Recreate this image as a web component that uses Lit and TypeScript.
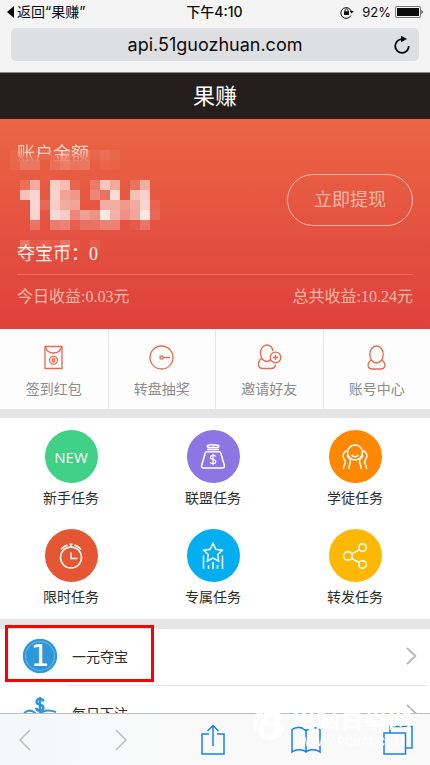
import { LitElement, html, css, svg } from "lit";
import { customElement } from "lit/decorators.js";

// Censor blocks over the hero: [x, y, opacity], on a 10px grid.
const CELLS: [number, number, number][] = [
  [1, 3, 0.05], [2, 3, 0.08], [3, 3, 0.08], [4, 3, 0.05], [5, 3, 0.08], [6, 3, 0.2], [7, 3, 0.1], [8, 3, 0.12], [9, 3, 0.04], [10, 3, 0.1], [11, 3, 0.05],
  [1, 4, 0.05], [2, 4, 0.16], [3, 4, 0.16], [5, 4, 0.12], [6, 4, 0.2], [7, 4, 0.14], [8, 4, 0.16], [10, 4, 0.05], [11, 4, 0.03],
  [2, 6, 0.12], [3, 6, 0.5], [5, 6, 0.7], [6, 6, 0.6], [7, 6, 0.07], [9, 6, 0.2], [10, 6, 0.66], [11, 6, 0.48], [13, 6, 0.15], [14, 6, 0.5],
  [2, 7, 0.64], [3, 7, 0.76], [5, 7, 0.74], [6, 7, 0.45], [7, 7, 0.38], [9, 7, 0.28], [10, 7, 0.16], [11, 7, 0.8], [13, 7, 0.62], [14, 7, 0.72],
  [3, 8, 0.76], [4, 8, 0.1], [5, 8, 0.7], [6, 8, 0.5], [7, 8, 0.46], [10, 8, 0.52], [11, 8, 0.52], [12, 8, 0.4], [13, 8, 0.5], [14, 8, 0.75], [15, 8, 0.08],
  [3, 9, 0.76], [5, 9, 0.78], [6, 9, 0.7], [7, 9, 0.3], [8, 9, 0.44], [9, 9, 0.36], [10, 9, 0.86], [11, 9, 0.54], [12, 9, 0.36], [13, 9, 0.48], [14, 9, 0.86], [15, 9, 0.12],
  [3, 10, 0.2], [5, 10, 0.24], [6, 10, 0.28], [7, 10, 0.07], [8, 10, 0.18], [9, 10, 0.18], [10, 10, 0.28], [11, 10, 0.28], [13, 10, 0.05], [14, 10, 0.2],
  [2, 12, 0.2], [3, 12, 0.06], [4, 12, 0.1], [5, 12, 0.06], [6, 12, 0.2], [7, 12, 0.04], [9, 12, 0.07],
];

const QUICK = [
  {
    label: "签到红包",
    icon: svg`<path d="M6 3.500h17v22H6z"/><path d="M6.500 4c2 8 14 8 16 0"/><circle cx="14.500" cy="17.300" r="4"/><path d="M13.500 15.800h2v3h-2z"/>`,
  },
  {
    label: "转盘抽奖",
    icon: svg`<circle cx="14.500" cy="14.500" r="11.500"/><circle cx="14.500" cy="14.500" r="1.600"/><path d="M16 14.500h7"/>`,
  },
  {
    label: "邀请好友",
    icon: svg`<path d="M15.800 16.500c-5 5-10.300-.5-10.300-6.500 0-4.500 2.800-8 6.300-8 3 0 5.500 2.500 6.200 6"/><path d="M6.500 15.500c-3 2-3.500 5.500-2.700 7.500.5 1.600 1.700 2.500 3.700 2.500h9c2.500 0 3.500-1.500 4-4"/><circle cx="20.500" cy="14.500" r="5.300"/><path d="M20.500 12v5M18 14.500h5"/>`,
  },
  {
    label: "账号中心",
    icon: svg`<ellipse cx="14.500" cy="11.500" rx="6.700" ry="8.500"/><path d="M9.300 17c-3 2-3.500 4.500-3 6.500.5 1.600 1.700 2.500 3.700 2.500h9c2 0 3.200-.9 3.700-2.500.5-2 0-4.500-3-6.500"/>`,
  },
];

const TASKS = [
  { label: "新手任务", tone: "green", icon: null },
  {
    label: "联盟任务",
    tone: "violet",
    icon: svg`<path d="M8 6.500h12M10 2.500c-2-1-2.500 1.500-.5 2h9c2-.5 1.500-3-.5-2-1.500-1-2.500-1-3.500 0-1.500-1-3.500-1-4.500 0zM7.500 8.800h13c.6 0 1 .4 1.200 1l3.600 12.500c.5 1.700-.3 2.700-1.800 2.700h-19c-1.500 0-2.300-1-1.800-2.700L6.300 9.800c.2-.6.6-1 1.200-1z"/><path d="M17 13.500c-.7-1-1.700-1.200-2.900-1.200-3.400 0-3.400 3.700 0 4.200 3.800.5 3.400 4.200 0 4.200-1.300 0-2.500-.3-3-1.400M14.100 10.800v11.500" stroke-width="1.200"/>`,
  },
  {
    label: "学徒任务",
    tone: "orange",
    icon: svg`<circle cx="14" cy="9.500" r="7.500"/><path d="M10.500 12c1.500 2.200 5.500 2.200 7 0M6 7.500C2 9 1 13 3.300 16.500c1 1.500 1.700 1.800.9 3.500-.8 1.700-1.700 3-1.700 6M22 7.500c4 1.500 5 5.500 2.700 9-1 1.500-1.700 1.800-.9 3.500.8 1.700 1.700 3 1.700 6M6.200 12.500c.3 2.500 4 2.800 3.300 6-.4 2-1.500 3-1.500 7.500M21.800 12.500c-.3 2.500-4 2.800-3.300 6 .4 2 1.500 3 1.500 7.500"/>`,
  },
  {
    label: "限时任务",
    tone: "red",
    icon: svg`<circle cx="14" cy="15.500" r="10.500"/><path d="M14 10.500v6h6.500M4 7.500C6 5 8 3.800 10.500 3M24 7.500C22 5 20 3.800 17.500 3M12.500 2.300h3M14 2.500V5"/>`,
  },
  {
    label: "专属任务",
    tone: "blue",
    icon: svg`<path d="m14 1.500 2.800 5.800 6.400.9-4.600 4.500 1.100 6.500-5.700-3-5.700 3 1.100-6.500-4.600-4.500 6.400-.9zM4.500 13.500V27M9.500 23v4M14 20v7M18.500 23v4M23.500 13.500V27"/>`,
  },
  {
    label: "转发任务",
    tone: "amber",
    icon: svg`<circle cx="7" cy="14" r="4.300"/><circle cx="21.500" cy="5.500" r="3.800"/><circle cx="21.500" cy="22.500" r="3.800"/><path d="m10.800 11.800 7.400-4M10.600 16.300l7.500 4.200"/>`,
  },
];

const shared = css`
  * {
    box-sizing: border-box;
  }
  svg {
    display: block;
    fill: none;
    stroke: currentColor;
    flex: none;
  }
  button {
    margin: 0;
    padding: 0;
    border: 0;
    background: none;
    color: inherit;
    font: inherit;
  }
  a {
    color: inherit;
    text-decoration: none;
  }
`;

@customElement("browser-top")
class BrowserTop extends LitElement {
  static styles = [
    shared,
    css`
      :host {
        display: block;
        background: #f4f4f4;
        color: #0b0b0b;
        font-family: Inter, "Noto Sans CJK SC", sans-serif;
      }
      .status {
        display: grid;
        grid-template-columns: 1fr auto 1fr;
        align-items: center;
        height: 24px;
        padding: 0 7px 0 6px;
        font-size: 14px;
        line-height: 24px;
      }
      .back {
        display: flex;
        align-items: center;
        gap: 3px;
      }
      .solid {
        fill: currentColor;
        stroke: none;
      }
      .time {
        font-weight: 500;
      }
      .right {
        display: flex;
        align-items: center;
        justify-content: flex-end;
        gap: 4px;
        font-size: 13px;
      }
      .lock {
        margin-right: 4px;
      }
      .bar {
        padding: 4px 11px 11px;
        border-bottom: 1px solid #8c8a89;
      }
      .pill {
        display: grid;
        grid-template-columns: 34px 1fr 34px;
        align-items: center;
        height: 33px;
        border-radius: 5px;
        background: #dedfe1;
      }
      .url {
        grid-column: 2;
        width: 100%;
        padding: 0;
        border: 0;
        outline: 0;
        background: none;
        color: inherit;
        font: 18px Inter, sans-serif;
        text-align: center;
      }
      .reload {
        display: grid;
        place-items: center;
        height: 33px;
      }
    `,
  ];
  render() {
    return html`
      <div class="status">
        <a class="back" href="#">
          <svg class="solid" width="8" height="12" viewBox="0 0 8 12"><path d="M8 0v12L1 6z" /></svg>
          <span>返回“果赚”</span>
        </a>
        <span class="time">下午4:10</span>
        <div class="right">
          <svg class="lock" width="14" height="14" viewBox="0 0 14 14">
            <path d="M11 10.500A5.400 5.400 0 1 1 11.400 6.500" />
            <path d="M9.600 6h4.200l-2.100 2.600zM4 6.300h5v3.700H4z" fill="currentColor" stroke="none" />
            <path d="M5 6.500V5.300c0-2 3-2 3 0v1.200" />
          </svg>
          <span>92%</span>
          <svg width="28" height="12" viewBox="0 0 28 12">
            <rect x=".5" y=".5" width="25" height="11" rx="1.500" stroke="#777" />
            <path d="M2 2h22v8H2zM26.500 4c1.500.5 1.500 3.500 0 4z" fill="currentColor" stroke="none" />
          </svg>
        </div>
      </div>
      <div class="bar">
        <div class="pill">
          <input class="url" aria-label="网址" value="api.51guozhuan.com" readonly />
          <button class="reload" aria-label="刷新">
            <svg width="18" height="20" viewBox="0 0 18 20" stroke-width="1.800">
              <path d="M8.800 4.200A6.800 6.800 0 1 0 15.800 11" />
              <path d="M8 .8v6.400l6-3.200z" fill="currentColor" stroke="none" />
            </svg>
          </button>
        </div>
      </div>
    `;
  }
}

@customElement("balance-card")
class BalanceCard extends LitElement {
  static styles = [
    shared,
    css`
      :host {
        display: block;
        position: relative;
        padding: 24px 17px 20px;
        background: linear-gradient(#ea6644, #df403c);
        color: #fdb9a8;
        font-family: "Liberation Serif", "Noto Sans CJK SC", serif;
      }
      .main {
        display: flex;
        justify-content: space-between;
        align-items: center;
        height: 114px;
      }
      .left {
        display: flex;
        flex-direction: column;
        justify-content: flex-end;
        gap: 74px;
        height: 132px;
      }
      .label {
        font-size: 18px;
        line-height: 24px;
        color: transparent;
        background: linear-gradient(#ffd8cc 40%, #ffffff20 70%);
        background-clip: text;
        -webkit-background-clip: text;
      }
      .unit {
        font-size: 12px;
        opacity: 0.6;
      }
      .coins {
        font-size: 18px;
        line-height: 24px;
        color: #fff0ec;
      }
      .mosaic {
        position: absolute;
        left: 0;
        top: 0;
      }
      .withdraw {
        width: 126px;
        height: 52px;
        border: 1px solid #fdb9a8;
        border-radius: 26px;
        font-size: 18px;
      }
      .totals {
        display: flex;
        justify-content: space-between;
        margin-top: 17px;
        padding-top: 10px;
        border-top: 1px solid #f26a62;
        font-size: 16px;
        line-height: 24px;
      }
    `,
  ];
  render() {
    return html`
      <div class="main">
        <div class="left">
          <span class="label">账户金额<span class="unit">（元）</span></span>
          <span class="coins">夺宝币：0</span>
        </div>
        <button class="withdraw">立即提现</button>
      </div>
      <svg class="mosaic" width="170" height="140" viewBox="0 1 170 140" shape-rendering="crispEdges" aria-hidden="true">
        ${CELLS.map(([x, y, o]) => svg`<rect x=${x * 10} y=${y * 10 + 2} width="10" height="10" fill="#fff" stroke="none" fill-opacity=${o} />`)}
      </svg>
      <div class="totals"><span>今日收益:0.03元</span><span>总共收益:10.24元</span></div>
    `;
  }
}

@customElement("browser-toolbar")
class BrowserToolbar extends LitElement {
  static styles = [
    shared,
    css`
      :host {
        display: flex;
        justify-content: space-between;
        align-items: center;
        position: relative;
        flex: none;
        height: 52px;
        padding: 0 16px 0 9px;
        border-top: 1px solid #bcbcbc;
        background: linear-gradient(90deg, #f4f8fa, #f9f9f9 40%);
        color: #1481fa;
      }
      .history {
        display: flex;
        gap: 64px;
        color: #bcbcbe;
      }
      .tool {
        display: grid;
        place-items: center;
        width: 32px;
        height: 48px;
      }
      .mark {
        position: absolute;
        right: 18px;
        bottom: 16px;
        display: flex;
        align-items: center;
        gap: 6px;
        color: #fff;
        pointer-events: none;
      }
      .words {
        display: flex;
        flex-direction: column;
        align-items: center;
        font: 700 24px/36px "Noto Sans CJK SC", sans-serif;
      }
      .site {
        font: 12px/14px Inter, sans-serif;
      }
    `,
  ];
  render() {
    return html`
      <div class="history">
        <button class="tool" aria-label="后退">
          <svg width="12" height="22" viewBox="0 0 12 22" stroke-width="1.500"><path d="M11 1 1 11l10 10" /></svg>
        </button>
        <button class="tool" aria-label="前进">
          <svg width="12" height="22" viewBox="0 0 12 22" stroke-width="1.500"><path d="m1 1 10 10L1 21" /></svg>
        </button>
      </div>
      <button class="tool" aria-label="分享">
        <svg width="24" height="32" viewBox="0 0 24 32" stroke-width="1.500">
          <path d="M8 10H1v20h22V10h-7M12 22V1.500M6.500 7 12 1.500 17.500 7" />
        </svg>
      </button>
      <button class="tool" aria-label="书签">
        <svg width="30" height="28" viewBox="0 0 30 28" stroke-width="1.500">
          <path d="M15 5c-3-4.500-10-4.500-14-1.500V26c4-3 11-3 14 0 3-3 10-3 14 0V3.500C25 .5 18 .5 15 5v21" />
        </svg>
      </button>
      <button class="tool" aria-label="标签页">
        <svg width="30" height="30" viewBox="0 0 30 30" stroke-width="1.500">
          <path d="M1 8h21.500v21H1zM7 8V1.500h22V23h-6.500" />
        </svg>
      </button>
      <div class="mark">
        <svg width="34" height="34" viewBox="0 0 34 34" stroke="none">
          <path d="M14 1C4 3-2 14 3 24 5 16 9 8 14 1z" fill="#fff" />
          <path fill-rule="evenodd" d="M13 5h9c8-1 10 7 4 10 9 3 7 18-8 18-8 0-13-6-11-13zM17 9l-2 6h4c5 0 6-6 2-6zM13 19c-3 5-1 9 3 9 6 0 8-9 2-9z" fill="#fff" />
        </svg>
        <div class="words"><span>电脑百事网</span><span class="site">WWW.PC841.COM</span></div>
      </div>
    `;
  }
}

@customElement("app-root")
class AppRoot extends LitElement {
  static styles = [
    shared,
    css`
      :host {
        display: flex;
        flex-direction: column;
        height: 100vh;
        overflow: hidden;
        background: #fff;
        color: #2b2b2b;
        font-family: "Noto Sans CJK SC", sans-serif;
        font-size: 14px;
        line-height: 20px;
      }
      .page {
        flex: 1;
        min-height: 0;
        overflow-y: auto;
        scrollbar-width: none;
      }
      .title {
        margin: 0;
        padding-bottom: 4px;
        background: #241f1c;
        color: #fff;
        font-size: 22px;
        font-weight: 400;
        line-height: 42px;
        text-align: center;
      }
      .quick {
        display: grid;
        grid-template-columns: repeat(4, 1fr);
        background: #fdfdfd;
        border-bottom: 9px solid #e5e5e5;
        color: #8c8c8c;
      }
      .entry {
        display: flex;
        flex-direction: column;
        align-items: center;
        gap: 6px;
        padding: 14px 0 11px;
      }
      .entry + .entry {
        border-left: 1px solid #e8e8e8;
      }
      .entry svg {
        color: #e8694c;
      }
      .tasks {
        display: grid;
        grid-template-columns: repeat(3, 1fr);
        row-gap: 22px;
        padding: 12px 4px 13px 0;
        border-bottom: 10px solid #e5e5e5;
      }
      .task {
        display: flex;
        flex-direction: column;
        align-items: center;
        gap: 4px;
      }
      .disc {
        display: grid;
        place-items: center;
        width: 53px;
        height: 53px;
        border-radius: 50%;
        color: #fff;
        font: 15px "Open Sans", sans-serif;
      }
      .green {
        background: #40d086;
      }
      .violet {
        background: #8b77e3;
      }
      .orange {
        background: #ff8800;
      }
      .red {
        background: #e55733;
      }
      .blue {
        background: #02adf0;
      }
      .amber {
        background: #ffb802;
      }
      .row {
        display: flex;
        align-items: center;
        position: relative;
        height: 57px;
        padding: 0 13px 4px 23px;
      }
      .row + .row::before {
        content: "";
        position: absolute;
        top: -1px;
        left: 67px;
        right: 3px;
        border-top: 1px solid #e6e6e6;
      }
      .name {
        flex: 1;
        margin-left: 15px;
      }
      .arrow {
        color: #b8b8b8;
      }
      .coin {
        display: grid;
        place-items: center;
        width: 34px;
        height: 34px;
        border-radius: 50%;
        background: #2f96da;
        box-shadow: inset 0 0 0 2px #2f96da, inset 0 0 0 3px #67b4e6;
        color: #fff;
        font: 30px/34px "DejaVu Sans", sans-serif;
      }
      .focus {
        position: absolute;
        left: 5px;
        top: -4px;
        width: 149px;
        height: 57px;
        border: 3px solid #fd0000;
      }
    `,
  ];
  render() {
    const arrow = html`<svg class="arrow" width="11" height="18" viewBox="0 0 11 18" stroke-width="1.800"><path d="m1 1 8.500 8L1 17" /></svg>`;
    return html`
      <browser-top></browser-top>
      <main class="page">
        <h1 class="title">果赚</h1>
        <balance-card></balance-card>
        <nav class="quick">
          ${QUICK.map(
            (q) => html`<a class="entry" href="#"><svg width="29" height="29" viewBox="0 0 29 29" stroke-width="1.300">${q.icon}</svg>${q.label}</a>`
          )}
        </nav>
        <nav class="tasks">
          ${TASKS.map(
            (t) => html`<a class="task" href="#">
              <span class="disc ${t.tone}">
                ${t.icon ? html`<svg width="28" height="28" viewBox="0 0 28 28" stroke-width="1.500">${t.icon}</svg>` : "NEW"}
              </span>
              ${t.label}
            </a>`
          )}
        </nav>
        <a class="row" href="#">
          <span class="coin">1</span><span class="name">一元夺宝</span>${arrow}
          <span class="focus"></span>
        </a>
        <a class="row" href="#">
          <svg width="34" height="34" viewBox="0 0 34 34" color="#2f96da" stroke-width="2">
            <path d="M20.500 5.500C20 3.500 18.800 3 17 3c-4.500 0-4.500 5 0 5.800 4.500.8 4.500 6 0 6-2 0-3.500-1-3.800-3M17 1v16" stroke-width="2.500" />
            <path d="M1 17c4-3 8-3 11 0 2 2 4 2 6 0 3-3 9-3 15-1M1 22c8-3 12 4 17 1s10-3 15-1" />
          </svg>
          <span class="name">每日下注</span>${arrow}
        </a>
      </main>
      <browser-toolbar></browser-toolbar>
    `;
  }
}
